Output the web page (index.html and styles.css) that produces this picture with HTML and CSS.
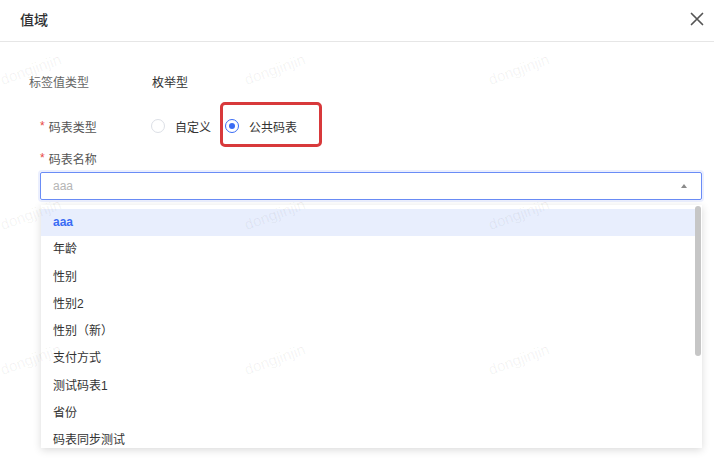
FILE: index.html
```html
<!DOCTYPE html>
<html lang="zh-CN">
<head>
<meta charset="UTF-8">
<meta name="viewport" content="width=device-width, initial-scale=1.0">
<title>值域</title>
<link rel="stylesheet" href="styles.css">
</head>
<body>
<div class="dialog">
    <div class="dialog-header">
        <span class="dialog-title">值域</span>
        <svg class="close" width="14" height="14" viewBox="0 0 14 14">
            <path d="M1.5 1.5 L12.5 12.5 M12.5 1.5 L1.5 12.5" stroke="#555" stroke-width="1.7" stroke-linecap="round"/>
        </svg>
    </div>

    <div class="dialog-body">
        <div class="row row-plain">
            <span class="label">标签值类型</span>
            <span class="value">枚举型</span>
        </div>

        <div class="row row-required">
            <span class="label"><i class="star">*</i>码表类型</span>
            <div class="radios">
                <label class="radio">
                    <span class="circle"></span>
                    <span>自定义</span>
                </label>
                <label class="radio marked">
                    <span class="circle checked"></span>
                    <span>公共码表</span>
                </label>
            </div>
        </div>

        <div class="field">
            <span class="label"><i class="star">*</i>码表名称</span>
            <div class="select">
                <span class="placeholder">aaa</span>
                <span class="arrow"></span>
            </div>
            <div class="dropdown">
                <ul class="options">
                    <li class="active">aaa</li>
                    <li>年龄</li>
                    <li>性别</li>
                    <li>性别2</li>
                    <li>性别（新）</li>
                    <li>支付方式</li>
                    <li>测试码表1</li>
                    <li>省份</li>
                    <li>码表同步测试</li>
                </ul>
                <div class="scrollbar"><div class="thumb"></div></div>
            </div>
        </div>
    </div>

    <!-- watermark layer -->
    <div class="watermark">
        <span>dongjinjin</span><span>dongjinjin</span><span>dongjinjin</span>
        <span>dongjinjin</span><span>dongjinjin</span><span>dongjinjin</span>
        <span>dongjinjin</span><span>dongjinjin</span><span>dongjinjin</span>
    </div>
</div>
</body>
</html>
```

FILE: styles.css
```css
/* dialog styles */
body {
    margin: 0;
    background: #fff;
    font-family: "Liberation Sans", "Noto Sans CJK SC", sans-serif;
    font-size: 12px;
    color: #333;
}

.dialog {
    position: relative;
    width: 714px;
    height: 469px;
    overflow: hidden;
}

.dialog-header {
    height: 42px;
    display: flex;
    align-items: center;
    justify-content: space-between;
    padding: 0 10px 3px 20px;
    box-sizing: border-box;
    border-bottom: 1px solid #e6e6e6;
}

.dialog-title {
    font-size: 14px;
    font-weight: 500;
    color: #303133;
}

.dialog-body {
    padding: 29px 12px 0 29px;
}

.row {
    display: flex;
    align-items: center;
    height: 20px;
}

.row-plain .label {
    width: 123px;
    color: #666;
}

.row-plain .value {
    color: #333;
}

.row-required {
    margin-top: 25px;
    padding-left: 11px;
}

.row-required .label {
    width: 111px;
}

.star {
    font-style: normal;
    color: #e8483f;
    margin-right: 4px;
    font-size: 12px;
    position: relative;
    top: -2px;
}

.label {
    color: #555;
}

.radios {
    display: flex;
    align-items: center;
}

.radio {
    display: flex;
    align-items: center;
    gap: 10px;
    color: #333;
}

.radio.marked {
    height: 45px;
    box-sizing: border-box;
    margin: -14px 0 -11px 9px;
    padding: 3px 22px 0 2px;
    border: 3px solid #d8393b;
    border-radius: 5px;
}

.circle {
    width: 12px;
    height: 12px;
    border: 1px solid #dcdfe6;
    border-radius: 50%;
    box-sizing: content-box;
    display: flex;
    align-items: center;
    justify-content: center;
}

.circle.checked {
    border-color: #3a6cf4;
}

.circle.checked::after {
    content: "";
    width: 6px;
    height: 6px;
    border-radius: 50%;
    background: #3a6cf4;
}

.field {
    padding-left: 11px;
    margin-top: 14px;
}

.field .label {
    display: block;
    line-height: 20px;
}

.select {
    margin-top: 2px;
    height: 28px;
    box-sizing: border-box;
    border: 1px solid #6a8cf6;
    border-radius: 2px;
    box-shadow: 0 0 0 2px rgba(90, 125, 245, 0.12);
    display: flex;
    align-items: center;
    justify-content: space-between;
    padding: 0 14px 0 12px;
}

.placeholder {
    color: #b5b5b5;
}

.arrow {
    width: 0;
    height: 0;
    border-left: 3px solid transparent;
    border-right: 3px solid transparent;
    border-bottom: 4px solid #8a8a8a;
}

.dropdown {
    margin-top: 5px;
    margin-left: 1px;
    height: 243px;
    display: flex;
    background: #fff;
    box-shadow: 0 2px 8px rgba(0, 0, 0, 0.15);
    overflow: hidden;
}

.options {
    flex: 1;
    list-style: none;
    margin: 0;
    padding: 4px 0 0;
}

.options li {
    height: 27.3px;
    line-height: 27.3px;
    padding-left: 12px;
    color: #333;
}

.options li.active {
    background: #e8eefd;
    color: #3a6cf4;
    font-weight: bold;
}

.scrollbar {
    width: 7px;
    padding-top: 1px;
}

.thumb {
    width: 6px;
    height: 150px;
    background: #c6c6c6;
    border-radius: 3px;
}

.watermark {
    position: absolute;
    left: -2px;
    top: 48px;
    display: grid;
    grid-template-columns: repeat(3, 244px);
    grid-auto-rows: 145px;
    pointer-events: none;
}

.watermark span {
    display: block;
    width: 80px;
    font-size: 15px;
    color: rgba(0, 0, 0, 0.06);
    transform: rotate(-20deg);
    transform-origin: left top;
    margin-top: 24px;
}
```
